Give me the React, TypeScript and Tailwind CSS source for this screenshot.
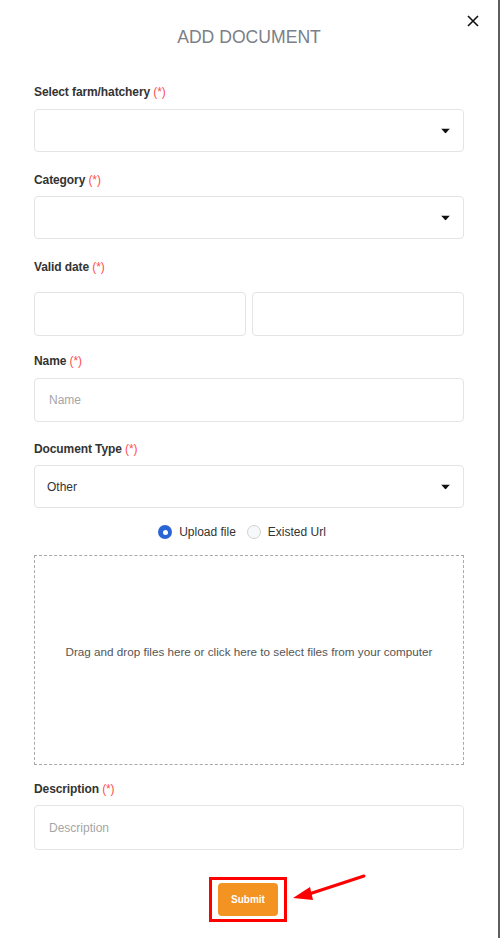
import React from "react";

const Required = () => <span className="font-normal text-[#ff4d4f]"> (*)</span>;

const Label = ({ text, className }: { text: string; className?: string }) => (
  <div className={`h-4 text-[12px] leading-4 font-bold tracking-[-0.1px] text-[#333] ${className ?? ""}`}>
    {text}
    <Required />
  </div>
);

const Caret = () => (
  <svg width="9" height="5" viewBox="0 0 9 5" className="absolute right-[13px] top-1/2 -translate-y-1/2">
    <path d="M0 0 L9 0 L4.5 5 Z" fill="#111" />
  </svg>
);

const SelectBox = ({ value, className }: { value?: string; className?: string }) => (
  <div
    className={`relative flex h-[43px] items-center rounded border border-[#e4e4e4] bg-white px-3 text-[12px] text-[#333] ${className ?? ""}`}
  >
    {value}
    <Caret />
  </div>
);

const TextBox = ({ placeholder, className }: { placeholder?: string; className?: string }) => (
  <div
    className={`flex items-center rounded border border-[#e4e4e4] bg-white px-[14px] text-[12px] text-[#a6a6a6] ${className ?? ""}`}
  >
    {placeholder}
  </div>
);

export default function App() {
  return (
    <div
      className="relative h-[938px] w-[500px] overflow-hidden bg-white"
      style={{ fontFamily: '"Liberation Sans", Arial, sans-serif' }}
    >
      <div className="absolute right-0 top-0 h-full w-[2px] bg-[#5f5f5f]" />

      {/* close */}
      <svg width="12" height="12" viewBox="0 0 12 12" className="absolute left-[467px] top-[15px]">
        <path d="M1 1 L11 11 M11 1 L1 11" stroke="#111" strokeWidth="1.6" />
      </svg>

      <div className="flex flex-col pl-[34px] pr-[36px]">
        <h1 className="pt-[25px] text-center text-[17.6px] leading-6 font-normal text-[#7b7f87]">ADD DOCUMENT</h1>

        <Label text="Select farm/hatchery" className="mt-[35px]" />
        <SelectBox className="mt-[9px]" />

        <Label text="Category" className="mt-[20px]" />
        <SelectBox className="mt-[8px]" />

        <Label text="Valid date" className="mt-[20px]" />
        <div className="mt-[17px] grid grid-cols-2 gap-[6px]">
          <TextBox className="h-[44px]" />
          <TextBox className="h-[44px]" />
        </div>

        <Label text="Name" className="mt-[17px]" />
        <TextBox placeholder="Name" className="mt-[9px] h-[44px]" />

        <Label text="Document Type" className="mt-[19px]" />
        <SelectBox value="Other" className="mt-[8px]" />

        <div className="mt-[16px] flex h-4 items-center justify-center gap-[7px] pr-[14px] text-[12px] text-[#333]">
          <span className="flex h-[14px] w-[14px] items-center justify-center rounded-full bg-[#2b64d4]">
            <span className="h-[5px] w-[5px] rounded-full bg-white" />
          </span>
          <span className="mr-[4px]">Upload file</span>
          <span className="h-[14px] w-[14px] rounded-full border border-[#d2d2d2] bg-[#f7f8fa]" />
          <span>Existed Url</span>
        </div>

        <div className="mt-[15px] flex h-[210px] items-center justify-center border border-dashed border-[#a9a9a9] pb-[16px] text-[11.7px] text-[#555]">
          Drag and drop files here or click here to select files from your computer
        </div>

        <Label text="Description" className="mt-[16px]" />
        <TextBox placeholder="Description" className="mt-[8px] h-[45px]" />

        <div className="mt-[27px] flex justify-center pr-[2px]">
          <div className="border-[3px] border-[#ff0000] px-[6px] py-[3px]">
            <button className="h-[33px] w-[60px] rounded bg-[#f39322] text-[10px] font-bold text-white">Submit</button>
          </div>
        </div>
      </div>

      {/* annotation arrow */}
      <svg width="90" height="40" viewBox="0 0 90 40" className="absolute left-[288px] top-[870px]">
        <path d="M76 6 L18 25" stroke="#f00" strokeWidth="3" strokeLinecap="round" />
        <path d="M5 28 L22 17 L25 30 Z" fill="#f00" />
      </svg>
    </div>
  );
}
